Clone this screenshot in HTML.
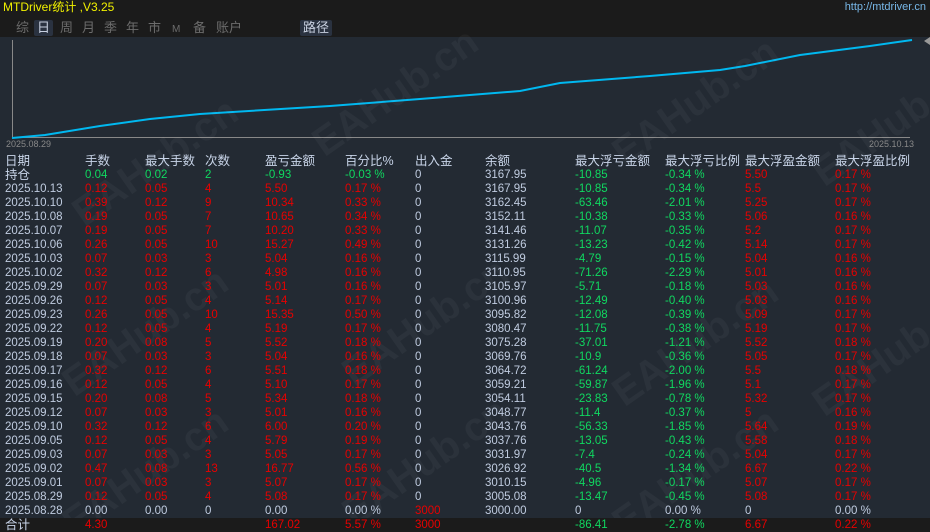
<!DOCTYPE html>
<html><head><meta charset="utf-8"><style>
*{margin:0;padding:0;box-sizing:border-box}
html,body{width:930px;height:532px;overflow:hidden;background:#232a33}
body{font-family:"Liberation Sans","Noto Sans CJK SC",sans-serif;font-size:11.5px;color:#c0cce0}
#wrap{position:relative;width:930px;height:532px;overflow:hidden;background:#232a33}
#top{position:absolute;left:0;top:0;width:930px;height:37px;background:#1b1b1b}
.title{position:absolute;left:3px;top:0;color:#f0f000;font-size:12px;line-height:14px}
.url{position:absolute;right:4px;top:1px;color:#78b8e8;font-size:11px}
.tab{position:absolute;top:20px;color:#6c6c6c;font-size:13px;line-height:16px}
.tabsel{background:#2a3240;color:#c8d0e0;padding:0 3px;border-radius:2px}
.wm{position:absolute;font-size:40px;font-weight:bold;color:rgba(255,255,255,0.04);transform:rotate(-35deg);white-space:nowrap;font-family:"Liberation Sans",sans-serif}
.r{position:absolute;left:0;width:930px;height:14px;line-height:14px}
.r span{position:absolute;white-space:nowrap}
.r span:nth-child(1){left:5px}.r span:nth-child(2){left:85px}.r span:nth-child(3){left:145px}.r span:nth-child(4){left:205px}.r span:nth-child(5){left:265px}.r span:nth-child(6){left:345px}.r span:nth-child(7){left:415px}.r span:nth-child(8){left:485px}.r span:nth-child(9){left:575px}.r span:nth-child(10){left:665px}.r span:nth-child(11){left:745px}.r span:nth-child(12){left:835px}
.d span{color:#e80000}.d span:nth-child(1),.d span:nth-child(7),.d span:nth-child(8){color:#c0cce0}
.d span:nth-child(9),.d span:nth-child(10){color:#10d860}
.h span{font-size:12.5px;color:#c8d4e8}
#tot{position:absolute;left:0;top:518px;width:930px;height:14px;background:#1b1b1b}
</style></head><body><div id="wrap">
<div id="top">
<div class="title">MTDriver统计 ,V3.25</div>
<div class="url">http://mtdriver.cn</div>
<span class="tab" style="left:16px">综</span>
<span class="tab tabsel" style="left:34px">日</span>
<span class="tab" style="left:60px">周</span>
<span class="tab" style="left:82px">月</span>
<span class="tab" style="left:104px">季</span>
<span class="tab" style="left:126px">年</span>
<span class="tab" style="left:148px">市</span>
<span class="tab" style="left:172px;font-size:10px;top:22px">M</span>
<span class="tab" style="left:193px">备</span>
<span class="tab" style="left:216px">账户</span>
<span class="tab tabsel" style="left:300px">路径</span>
</div>
<svg style="position:absolute;left:0;top:37px" width="930" height="110">
<line x1="12.5" y1="3" x2="12.5" y2="101" stroke="#888" stroke-width="1"/>
<line x1="12" y1="100.5" x2="910" y2="100.5" stroke="#888" stroke-width="1"/>
<polyline fill="none" stroke="#00b8f0" stroke-width="2" points="12,101 45,98 100,89 150,82 200,77 330,69 420,62 520,54 560,46 650,39 720,33 745,29 800,18 870,9 912,3"/>
<polygon points="924,4 930,0 930,8" fill="#999"/>
<text x="6" y="110" fill="#888" font-size="9" font-family="Liberation Sans">2025.08.29</text>
<text x="869" y="110" fill="#888" font-size="9" font-family="Liberation Sans">2025.10.13</text>
</svg>
<div class="wm" style="left:60px;top:140px">EAHub.cn</div>
<div class="wm" style="left:300px;top:70px">EAHub.cn</div>
<div class="wm" style="left:600px;top:80px">EAHub.cn</div>
<div class="wm" style="left:800px;top:100px">EAHub.cn</div>
<div class="wm" style="left:50px;top:310px">EAHub.cn</div>
<div class="wm" style="left:330px;top:300px">EAHub.cn</div>
<div class="wm" style="left:600px;top:320px">EAHub.cn</div>
<div class="wm" style="left:800px;top:330px">EAHub.cn</div>
<div class="wm" style="left:50px;top:450px">EAHub.cn</div>
<div class="wm" style="left:330px;top:440px">EAHub.cn</div>
<div class="wm" style="left:600px;top:450px">EAHub.cn</div>
<div id="tot"></div>
<div class="r h" style="top:154px"><span>日期</span><span>手数</span><span>最大手数</span><span>次数</span><span>盈亏金额</span><span>百分比%</span><span>出入金</span><span>余额</span><span>最大浮亏金额</span><span>最大浮亏比例</span><span>最大浮盈金额</span><span>最大浮盈比例</span></div>
<div class="r d" style="top:168px"><span style="font-size:12.5px;color:#c8d4e8">持仓</span><span style="color:#10d860">0.04</span><span style="color:#10d860">0.02</span><span style="color:#10d860">2</span><span style="color:#10d860">-0.93</span><span style="color:#10d860">-0.03 %</span><span>0</span><span>3167.95</span><span>-10.85</span><span>-0.34 %</span><span>5.50</span><span>0.17 %</span></div>
<div class="r d" style="top:182px"><span>2025.10.13</span><span>0.12</span><span>0.05</span><span>4</span><span>5.50</span><span>0.17 %</span><span>0</span><span>3167.95</span><span>-10.85</span><span>-0.34 %</span><span>5.5</span><span>0.17 %</span></div>
<div class="r d" style="top:196px"><span>2025.10.10</span><span>0.39</span><span>0.12</span><span>9</span><span>10.34</span><span>0.33 %</span><span>0</span><span>3162.45</span><span>-63.46</span><span>-2.01 %</span><span>5.25</span><span>0.17 %</span></div>
<div class="r d" style="top:210px"><span>2025.10.08</span><span>0.19</span><span>0.05</span><span>7</span><span>10.65</span><span>0.34 %</span><span>0</span><span>3152.11</span><span>-10.38</span><span>-0.33 %</span><span>5.06</span><span>0.16 %</span></div>
<div class="r d" style="top:224px"><span>2025.10.07</span><span>0.19</span><span>0.05</span><span>7</span><span>10.20</span><span>0.33 %</span><span>0</span><span>3141.46</span><span>-11.07</span><span>-0.35 %</span><span>5.2</span><span>0.17 %</span></div>
<div class="r d" style="top:238px"><span>2025.10.06</span><span>0.26</span><span>0.05</span><span>10</span><span>15.27</span><span>0.49 %</span><span>0</span><span>3131.26</span><span>-13.23</span><span>-0.42 %</span><span>5.14</span><span>0.17 %</span></div>
<div class="r d" style="top:252px"><span>2025.10.03</span><span>0.07</span><span>0.03</span><span>3</span><span>5.04</span><span>0.16 %</span><span>0</span><span>3115.99</span><span>-4.79</span><span>-0.15 %</span><span>5.04</span><span>0.16 %</span></div>
<div class="r d" style="top:266px"><span>2025.10.02</span><span>0.32</span><span>0.12</span><span>6</span><span>4.98</span><span>0.16 %</span><span>0</span><span>3110.95</span><span>-71.26</span><span>-2.29 %</span><span>5.01</span><span>0.16 %</span></div>
<div class="r d" style="top:280px"><span>2025.09.29</span><span>0.07</span><span>0.03</span><span>3</span><span>5.01</span><span>0.16 %</span><span>0</span><span>3105.97</span><span>-5.71</span><span>-0.18 %</span><span>5.03</span><span>0.16 %</span></div>
<div class="r d" style="top:294px"><span>2025.09.26</span><span>0.12</span><span>0.05</span><span>4</span><span>5.14</span><span>0.17 %</span><span>0</span><span>3100.96</span><span>-12.49</span><span>-0.40 %</span><span>5.03</span><span>0.16 %</span></div>
<div class="r d" style="top:308px"><span>2025.09.23</span><span>0.26</span><span>0.05</span><span>10</span><span>15.35</span><span>0.50 %</span><span>0</span><span>3095.82</span><span>-12.08</span><span>-0.39 %</span><span>5.09</span><span>0.17 %</span></div>
<div class="r d" style="top:322px"><span>2025.09.22</span><span>0.12</span><span>0.05</span><span>4</span><span>5.19</span><span>0.17 %</span><span>0</span><span>3080.47</span><span>-11.75</span><span>-0.38 %</span><span>5.19</span><span>0.17 %</span></div>
<div class="r d" style="top:336px"><span>2025.09.19</span><span>0.20</span><span>0.08</span><span>5</span><span>5.52</span><span>0.18 %</span><span>0</span><span>3075.28</span><span>-37.01</span><span>-1.21 %</span><span>5.52</span><span>0.18 %</span></div>
<div class="r d" style="top:350px"><span>2025.09.18</span><span>0.07</span><span>0.03</span><span>3</span><span>5.04</span><span>0.16 %</span><span>0</span><span>3069.76</span><span>-10.9</span><span>-0.36 %</span><span>5.05</span><span>0.17 %</span></div>
<div class="r d" style="top:364px"><span>2025.09.17</span><span>0.32</span><span>0.12</span><span>6</span><span>5.51</span><span>0.18 %</span><span>0</span><span>3064.72</span><span>-61.24</span><span>-2.00 %</span><span>5.5</span><span>0.18 %</span></div>
<div class="r d" style="top:378px"><span>2025.09.16</span><span>0.12</span><span>0.05</span><span>4</span><span>5.10</span><span>0.17 %</span><span>0</span><span>3059.21</span><span>-59.87</span><span>-1.96 %</span><span>5.1</span><span>0.17 %</span></div>
<div class="r d" style="top:392px"><span>2025.09.15</span><span>0.20</span><span>0.08</span><span>5</span><span>5.34</span><span>0.18 %</span><span>0</span><span>3054.11</span><span>-23.83</span><span>-0.78 %</span><span>5.32</span><span>0.17 %</span></div>
<div class="r d" style="top:406px"><span>2025.09.12</span><span>0.07</span><span>0.03</span><span>3</span><span>5.01</span><span>0.16 %</span><span>0</span><span>3048.77</span><span>-11.4</span><span>-0.37 %</span><span>5</span><span>0.16 %</span></div>
<div class="r d" style="top:420px"><span>2025.09.10</span><span>0.32</span><span>0.12</span><span>6</span><span>6.00</span><span>0.20 %</span><span>0</span><span>3043.76</span><span>-56.33</span><span>-1.85 %</span><span>5.64</span><span>0.19 %</span></div>
<div class="r d" style="top:434px"><span>2025.09.05</span><span>0.12</span><span>0.05</span><span>4</span><span>5.79</span><span>0.19 %</span><span>0</span><span>3037.76</span><span>-13.05</span><span>-0.43 %</span><span>5.58</span><span>0.18 %</span></div>
<div class="r d" style="top:448px"><span>2025.09.03</span><span>0.07</span><span>0.03</span><span>3</span><span>5.05</span><span>0.17 %</span><span>0</span><span>3031.97</span><span>-7.4</span><span>-0.24 %</span><span>5.04</span><span>0.17 %</span></div>
<div class="r d" style="top:462px"><span>2025.09.02</span><span>0.47</span><span>0.08</span><span>13</span><span>16.77</span><span>0.56 %</span><span>0</span><span>3026.92</span><span>-40.5</span><span>-1.34 %</span><span>6.67</span><span>0.22 %</span></div>
<div class="r d" style="top:476px"><span>2025.09.01</span><span>0.07</span><span>0.03</span><span>3</span><span>5.07</span><span>0.17 %</span><span>0</span><span>3010.15</span><span>-4.96</span><span>-0.17 %</span><span>5.07</span><span>0.17 %</span></div>
<div class="r d" style="top:490px"><span>2025.08.29</span><span>0.12</span><span>0.05</span><span>4</span><span>5.08</span><span>0.17 %</span><span>0</span><span>3005.08</span><span>-13.47</span><span>-0.45 %</span><span>5.08</span><span>0.17 %</span></div>
<div class="r" style="top:504px"><span>2025.08.28</span><span>0.00</span><span>0.00</span><span>0</span><span>0.00</span><span>0.00 %</span><span style="color:#e80000">3000</span><span>3000.00</span><span>0</span><span>0.00 %</span><span>0</span><span>0.00 %</span></div>
<div class="r d" style="top:518px"><span style="font-size:12.5px;color:#c8d4e8">合计</span><span>4.30</span><span></span><span></span><span>167.02</span><span>5.57 %</span><span style="color:#e80000">3000</span><span></span><span>-86.41</span><span>-2.78 %</span><span>6.67</span><span>0.22 %</span></div>
</div></body></html>
